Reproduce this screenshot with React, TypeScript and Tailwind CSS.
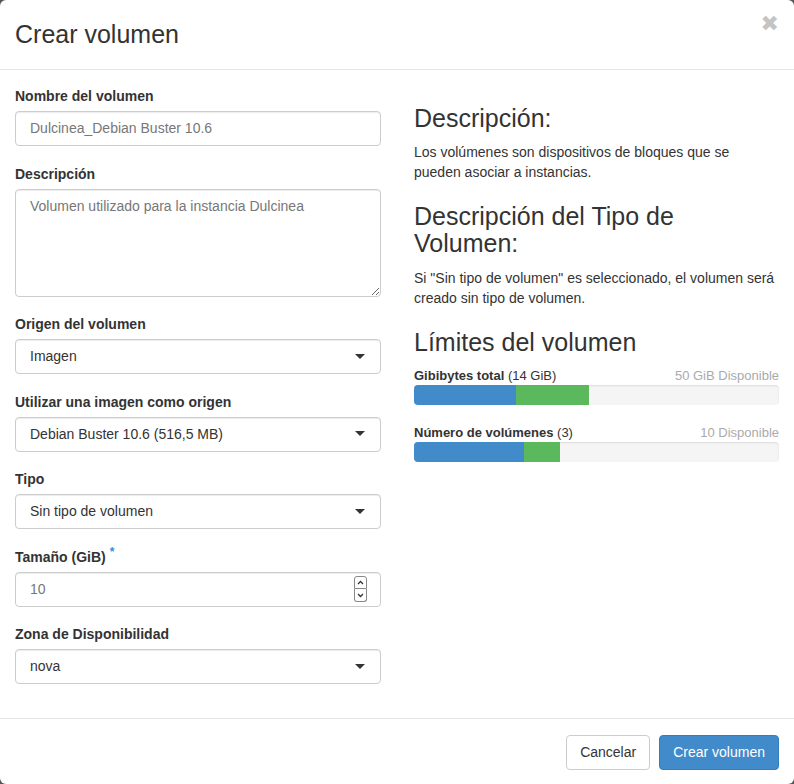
import React from "react";

const inputBox =
  "block w-full h-[35px] rounded-[4px] border border-[#cccccc] bg-white px-[14px] text-[14px] text-[#333] shadow-[inset_0_1px_1px_rgba(0,0,0,0.075)]";

function Label({ children }: { children: React.ReactNode }) {
  return <label className="block text-[14px] leading-[20px] font-bold text-[#333] mb-[5px]">{children}</label>;
}

function SelectBox({ value }: { value: string }) {
  return (
    <div className={`${inputBox} flex items-center justify-between`}>
      <span>{value}</span>
      <svg width="10" height="6" viewBox="0 0 10 6" className="mr-[1px]">
        <path d="M0 0 L10 0 L5 5 Z" fill="#333" />
      </svg>
    </div>
  );
}

function LimitBar({
  label,
  amount,
  available,
  used,
  adding,
}: {
  label: string;
  amount: string;
  available: string;
  used: number;
  adding: number;
}) {
  return (
    <div className="mb-[18px]">
      <div className="flex justify-between text-[13px] leading-[19px]">
        <span className="text-[#333]">
          <strong>{label}</strong> {amount}
        </span>
        <span className="text-[#aaa]">{available}</span>
      </div>
      <div className="flex h-[20px] rounded-[4px] bg-[#f5f5f5] overflow-hidden shadow-[inset_0_1px_2px_rgba(0,0,0,0.1)]">
        <div className="h-full bg-[#428bca]" style={{ width: `${used}%` }} />
        <div className="h-full bg-[#5cb85c]" style={{ width: `${adding}%` }} />
      </div>
    </div>
  );
}

export default function App() {
  return (
    <div
      className="w-[794px] h-[784px] bg-[#555] overflow-hidden"
      style={{ fontFamily: '"Liberation Sans", Arial, sans-serif' }}
    >
      <div className="relative w-[794px] h-[784px] bg-white rounded-[6px] text-[#333]">
        {/* header */}
        <div className="h-[70px] border-b border-[#e5e5e5] px-[15px] flex items-center">
          <h4 className="text-[25px] leading-[30px] font-normal text-[#333] -mt-[2px]">Crear volumen</h4>
          <button
            className="absolute right-[15px] top-[13px] text-[22px] leading-none text-[#c4c4c4]"
            style={{ fontFamily: '"DejaVu Sans", sans-serif' }}
          >
            ✖
          </button>
        </div>

        {/* body */}
        <div className="px-[15px] pt-[16px] pb-[34px] grid grid-cols-[366px_365px] gap-x-[33px]">
          <div>
            <div className="mb-[17.5px]">
              <Label>Nombre del volumen</Label>
              <div className={`${inputBox} flex items-center text-[#777]`}>Dulcinea_Debian Buster 10.6</div>
            </div>
            <div className="mb-[17.5px]">
              <Label>Descripción</Label>
              <textarea
                readOnly
                placeholder="Volumen utilizado para la instancia Dulcinea"
                className="block w-full h-[108px] rounded-[4px] border border-[#cccccc] bg-white px-[14px] pt-[6px] text-[14px] leading-[20px] placeholder:text-[#777] shadow-[inset_0_1px_1px_rgba(0,0,0,0.075)] resize-y outline-none"
              />
            </div>
            <div className="mb-[17.5px]">
              <Label>Origen del volumen</Label>
              <SelectBox value="Imagen" />
            </div>
            <div className="mb-[17.5px]">
              <Label>Utilizar una imagen como origen</Label>
              <SelectBox value="Debian Buster 10.6 (516,5 MB)" />
            </div>
            <div className="mb-[17.5px]">
              <Label>Tipo</Label>
              <SelectBox value="Sin tipo de volumen" />
            </div>
            <div className="mb-[17.5px]">
              <Label>
                Tamaño (GiB) <sup className="text-[#3a8ede] text-[12px] -top-[6px] relative">*</sup>
              </Label>
              <div className={`${inputBox} flex items-center justify-between text-[#777] pr-[13px]`}>
                <span>10</span>
                <div className="flex flex-col w-[13px]">
                  <div className="h-[13px] border border-[#888] rounded-t-[3px] flex items-center justify-center">
                    <svg width="7" height="5" viewBox="0 0 7 5">
                      <path d="M1 4 L3.5 1.5 L6 4" stroke="#333" strokeWidth="1.3" fill="none" />
                    </svg>
                  </div>
                  <div className="h-[13px] border border-t-0 border-[#888] rounded-b-[3px] flex items-center justify-center">
                    <svg width="7" height="5" viewBox="0 0 7 5">
                      <path d="M1 1 L3.5 3.5 L6 1" stroke="#333" strokeWidth="1.3" fill="none" />
                    </svg>
                  </div>
                </div>
              </div>
            </div>
            <div>
              <Label>Zona de Disponibilidad</Label>
              <SelectBox value="nova" />
            </div>
          </div>

          <div className="text-[14px] leading-[20px]">
            <h3 className="text-[25px] leading-[1.1] font-normal mt-[19px] mb-[9px]">Descripción:</h3>
            <p>Los volúmenes son dispositivos de bloques que se pueden asociar a instancias.</p>
            <h3 className="text-[25px] leading-[1.1] font-normal mt-[21px] mb-[10px]">
              Descripción del Tipo de Volumen:
            </h3>
            <p>Si "Sin tipo de volumen" es seleccionado, el volumen será creado sin tipo de volumen.</p>
            <h3 className="text-[25px] leading-[1.1] font-normal mt-[21px] mb-[10px]">Límites del volumen</h3>
            <LimitBar label="Gibibytes total" amount="(14 GiB)" available="50 GiB Disponible" used={28} adding={20} />
            <LimitBar label="Número de volúmenes" amount="(3)" available="10 Disponible" used={30} adding={10} />
          </div>
        </div>

        {/* footer */}
        <div className="border-t border-[#e5e5e5] px-[15px] pt-[16px] flex justify-end gap-[9px]">
          <button className="h-[35px] px-[13px] rounded-[4px] border border-[#ccc] bg-white text-[14px] text-[#333]">
            Cancelar
          </button>
          <button className="h-[35px] px-[13px] rounded-[4px] border border-[#357ebd] bg-[#428bca] text-[14px] text-white">
            Crear volumen
          </button>
        </div>
      </div>
    </div>
  );
}
